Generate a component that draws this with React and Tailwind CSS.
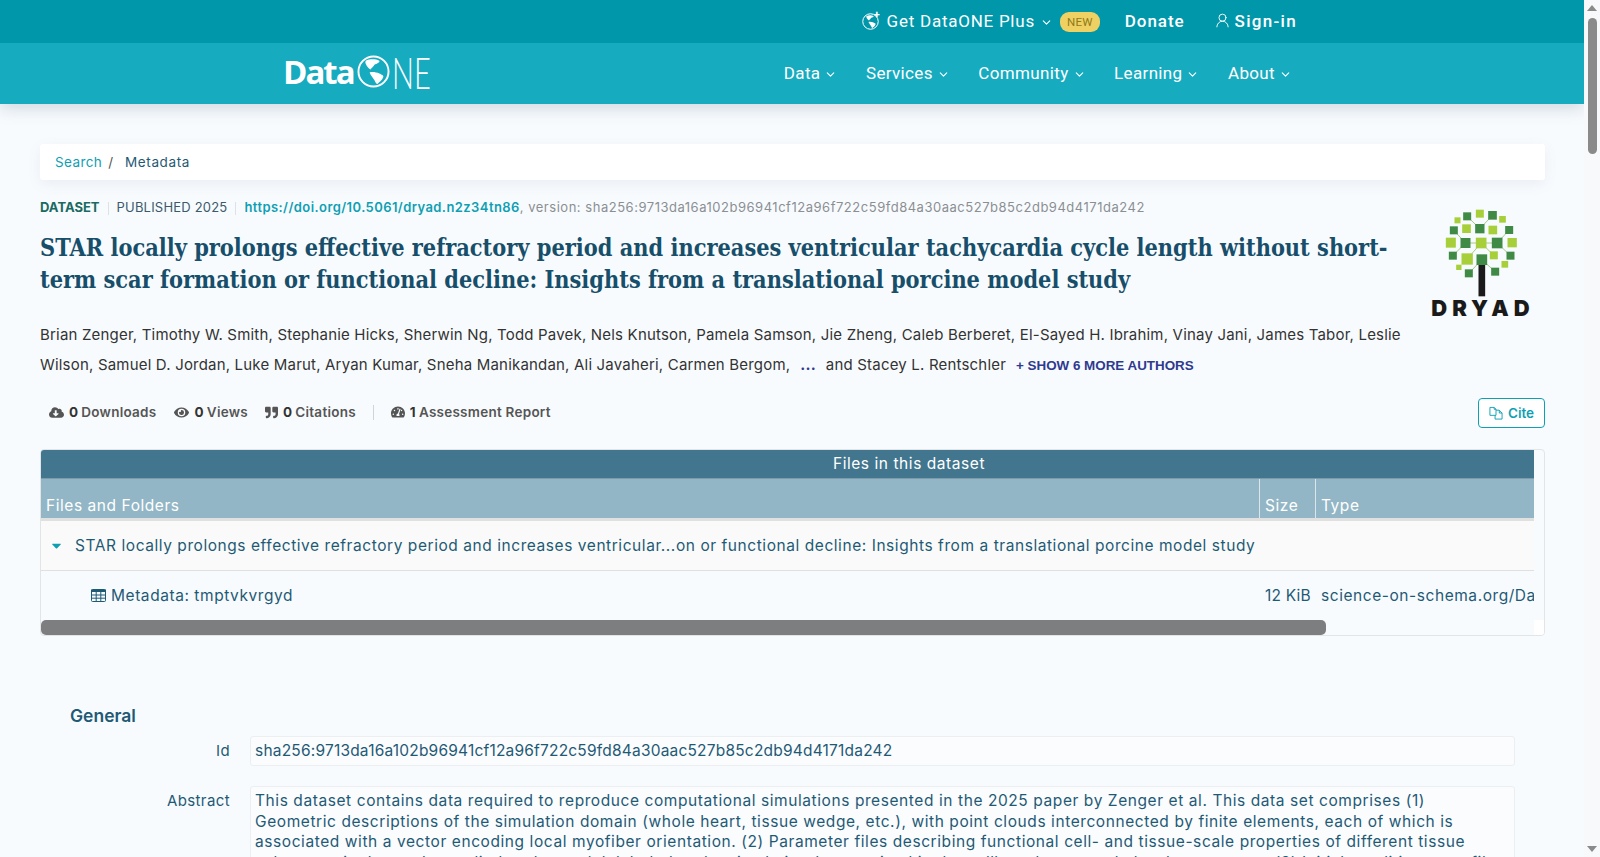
import React from 'react';
import { ChevronDown, UserRound } from 'lucide-react';
import { FaCloudDownloadAlt, FaEye, FaQuoteRight, FaTachometerAlt, FaCaretDown } from 'react-icons/fa';

const TITLE = 'STAR locally prolongs effective refractory period and increases ventricular tachycardia cycle length without short-term scar formation or functional decline: Insights from a translational porcine model study';
const ID = 'sha256:9713da16a102b96941cf12a96f722c59fd84a30aac527b85c2db94d4171da242';

// squares of the Dryad tree: x, y, size (center based)
const DARK = [[262,78,24],[338,75,26],[222,120,24],[300,115,28],[388,119,24],[257,158,30],[352,158,32],[219,196,24],[392,196,24],[306,208,32],[267,249,24],[346,244,24]];
const LIGHT = [[300,70,24],[233,90,18],[368,87,20],[260,115,26],[339,119,26],[213,157,30],[304,158,32],[397,157,28],[262,206,34],[342,195,24],[375,222,20],[237,231,16]];

function DryadLogo() {
  return (
    <div className="w-[102px] flex flex-col items-center">
      <svg viewBox="190 50 230 270" className="w-[77px] h-[90px]">
        <g stroke="#7fb04a" strokeWidth="2" fill="none">
          <path d="M300 115L262 78M300 115L338 75M257 158L222 120M352 158L388 119M257 158L219 196M352 158L392 196M306 208L267 249M306 208L346 244M304 158L257 158M304 158L352 158M304 158L262 206M304 158L342 195" />
        </g>
        {LIGHT.map(([x, y, s], i) => <rect key={i} x={x - s / 2} y={y - s / 2} width={s} height={s} fill="#a6cf3a" />)}
        {DARK.map(([x, y, s], i) => <rect key={i} x={x - s / 2} y={y - s / 2} width={s} height={s} fill="#3f8a45" />)}
        <rect x="296" y="224" width="20" height="94" fill="#1a1a1a" />
      </svg>
      <span className="mt-[2px] ml-[4px] font-['Inter',sans-serif] font-black text-[#1a1a1a] text-[22px] leading-[18px] tracking-[5px] whitespace-nowrap">DRYAD</span>
    </div>
  );
}

function Globe({ className, width = 2 }) {
  return (
    <svg viewBox="0 0 34 34" className={className}>
      <circle cx="17" cy="17" r="15.5" fill="none" stroke="currentColor" strokeWidth={width} />
      <path d="M9 6c4-2 10-2 14 0 1 2-3 3-5 4-1 2-3 3-4 5-2-1-3-3-4-4-1-2-2-3-1-5zM13 18c3-1 7 0 10 1 2 1 5 2 4 4-1 3-4 5-6 7-1 0-2-2-3-4-1-2-4-5-5-8z" fill="currentColor" />
    </svg>
  );
}

function TableIcon() {
  return (
    <svg viewBox="0 0 15 13" className="w-[15px] h-[13px] text-[#1f5a75]" fill="none" stroke="currentColor" strokeWidth="1">
      <rect x="0.5" y="0.5" width="14" height="12" rx="1" />
      <path d="M0 1.8h15" strokeWidth="2.4" />
      <path d="M0 6h15M0 9.2h15M5.2 3v10M9.8 3v10" />
    </svg>
  );
}

function FilesIcon() {
  return (
    <svg viewBox="0 0 15 15" className="w-[14px] h-[14px]" fill="none" stroke="currentColor" strokeWidth="1">
      <path d="M1 1.5h4.5l2 2v6.5H1zM5.5 1.5v2h2" />
      <path d="M7.5 4.5h3.5l3 3v6.5H6.5V10M11 4.5v3h3" />
    </svg>
  );
}

function NavItem({ label }) {
  return (
    <a className="flex items-center gap-[4px] text-white text-[17px] font-['Roboto',sans-serif] tracking-[0.35px]">
      {label}
      <ChevronDown size={13} strokeWidth={2} className="mt-[2px]" />
    </a>
  );
}

function Stat({ icon, num, label }) {
  return (
    <span className="flex items-center text-[#555] text-[13.5px] font-semibold tracking-[0.25px]">
      {icon}
      <b className="ml-[5px] mr-[3px] font-bold text-[#333]">{num}</b>
      {label}
    </span>
  );
}

function Header() {
  return (
    <header className="shrink-0 shadow-[0_4px_16px_rgba(60,90,110,0.22)] relative">
      <div className="h-[43px] bg-[#0097ab] flex items-center justify-end pr-[287px] text-white font-['Roboto',sans-serif]">
        <a className="flex items-center text-[17px] tracking-[0.75px]">
          <span className="relative mr-[8px]">
            <Globe className="w-[17px] h-[17px]" />
            <span className="absolute -top-[4px] -right-[2px] text-[11px] leading-[11px] font-bold">+</span>
          </span>
          Get DataONE Plus
          <ChevronDown size={13} strokeWidth={2} className="ml-[5px] mt-[2px]" />
        </a>
        <span className="ml-[7px] bg-[#eed162] text-[#8f7a1b] text-[11.5px] leading-[20px] h-[20px] px-[7px] rounded-[9px] tracking-[0.3px]">NEW</span>
        <a className="ml-[25px] text-[17px] font-medium tracking-[0.95px]">Donate</a>
        <a className="ml-[29px] flex items-center text-[17px] font-medium tracking-[1.3px]">
          <UserRound size={17} strokeWidth={1.3} className="mr-[4px] -mt-[3px]" />
          Sign-in
        </a>
      </div>
      <div className="h-[61px] bg-[#17abc0] flex items-center pl-[283px] pr-[292px] justify-between">
        <a className="flex items-center text-white -mt-[4px]">
          <span className="font-['Open_Sans',sans-serif] font-bold text-[33px] tracking-[-2px] leading-none">Data</span>
          <Globe className="w-[33px] h-[33px] ml-[3px]" />
          <span className="w-[38px] ml-[2px] inline-block origin-left scale-x-[0.66] font-['Lato',sans-serif] font-light text-[44px] leading-none whitespace-nowrap">NE</span>
        </a>
        <nav className="flex items-center gap-[28.5px]">
          {['Data', 'Services', 'Community', 'Learning', 'About'].map((n) => <NavItem key={n} label={n} />)}
        </nav>
      </div>
    </header>
  );
}

function FilesTable() {
  return (
    <div className="mt-[21px] border border-[#e2e4e6] rounded-[4px] overflow-hidden h-[187px] flex flex-col">
      <div className="flex-1 mr-[10px] overflow-hidden">
        <div className="w-[1736px] text-[15.5px] tracking-[0.56px]">
          <div className="h-[29px] bg-[#41768e] border-b border-[#7d9cab] text-white text-center leading-[28px]">Files in this dataset</div>
          <div className="grid grid-cols-[1219px_56px_1fr] h-[42px] bg-[#92b6c5] border-b-[3px] border-[#e0e0e0] text-white">
            <div className="pl-[5px] pt-[15px] border-r border-[#dbe6eb]">Files and Folders</div>
            <div className="pl-[5px] pt-[15px] border-r border-[#dbe6eb]">Size</div>
            <div className="pl-[5px] pt-[15px]">Type</div>
          </div>
          <div className="h-[50px] bg-[#fafafa] border-b border-[#e0e0e0] flex items-center text-[#1f5a75] whitespace-nowrap">
            <FaCaretDown size={15} className="ml-[8px] mr-[11px] text-[#0f9fb3]" />
            STAR locally prolongs effective refractory period and increases ventricular...on or functional decline: Insights from a translational porcine model study
          </div>
          <div className="grid grid-cols-[1219px_56px_1fr] h-[49px] items-center text-[#1f5a75] whitespace-nowrap">
            <div className="pl-[50px] flex items-center gap-[5px]"><TableIcon />Metadata: tmptvkvrgyd</div>
            <div className="pl-[5px] tracking-[0.2px]">12 KiB</div>
            <div className="pl-[5px]">science-on-schema.org/Dataset</div>
          </div>
        </div>
      </div>
      <div className="h-[15px] flex shrink-0">
        <div className="flex-1"><div className="w-[1285px] h-[15px] bg-[#7d7e80] rounded-[5px]"></div></div>
        <div className="w-[10px] bg-white"></div>
      </div>
    </div>
  );
}

function Field({ label, children, className }) {
  return (
    <div className={`flex ${className}`}>
      <div className="w-[180px] pr-[20px] pt-[4px] text-right text-[15px] tracking-[0.4px] text-[#1f5a75] shrink-0">{label}</div>
      <div className="flex-1 bg-[#fbfcfe] border border-[#eceff1] rounded-[3px] px-[4px] py-[4px] text-[15.5px] leading-[20.4px] text-[#1f5a75]">{children}</div>
    </div>
  );
}

export default function App() {
  return (
    <div className="h-[857px] overflow-hidden flex bg-[#f8fbfe] font-['Inter',sans-serif]">
      <div className="flex-1 min-w-0 flex flex-col overflow-hidden">
        <Header />
        <main className="px-[40px] pr-[39px] pt-[40px]">
          <div className="h-[36px] bg-white rounded-[3px] shadow-[0_4px_14px_rgba(70,90,110,0.08)] flex items-center pl-[15px] text-[13.5px]">
            <a className="text-[#0f9fb3] tracking-[0.4px]">Search</a>
            <span className="text-[#555] ml-[6px]">/</span>
            <span className="text-[#1f5a75] ml-[12px] tracking-[0.6px]">Metadata</span>
          </div>

          <div className="flex mt-[18px]">
            <div className="flex-1 min-w-0">
              <div className="flex items-center h-[20px] text-[13px] whitespace-nowrap">
                <b className="text-[#1a6a63] font-bold">DATASET</b>
                <span className="mx-[8px] h-[13px] border-l border-[#dde2e6]"></span>
                <span className="text-[#3b5a6c] tracking-[0.2px]">PUBLISHED 2025</span>
                <span className="mx-[8px] h-[13px] border-l border-[#dde2e6]"></span>
                <a className="text-[#0f9fb3] font-semibold tracking-[0.42px]">https://doi.org/10.5061/dryad.n2z34tn86</a>
                <span className="text-[#8b8f93] tracking-[0.52px]">, version: {ID}</span>
              </div>
              <h1 className="mt-[14px] w-[1350px] font-['DejaVu_Serif_Condensed','DejaVu_Serif',serif] font-bold text-[23.3px] leading-[32px] text-[#174f6b]">{TITLE}</h1>
              <p className="mt-[24px] w-[1370px] text-[15px] tracking-[0.19px] leading-[30px] text-[#333]">
                Brian Zenger, Timothy W. Smith, Stephanie Hicks, Sherwin Ng, Todd Pavek, Nels Knutson, Pamela Samson, Jie Zheng, Caleb Berberet, El-Sayed H. Ibrahim, Vinay Jani, James Tabor, Leslie Wilson, Samuel D. Jordan, Luke Marut, Aryan Kumar, Sneha Manikandan, Ali Javaheri, Carmen Bergom,
                <b className="mx-[10px] text-[#2f3a8f]">...</b>
                and Stacey L. Rentschler
                <a className="ml-[10px] font-['Liberation_Sans',sans-serif] font-bold text-[13.4px] tracking-normal text-[#2f3a8f]">+ SHOW 6 MORE AUTHORS</a>
              </p>
            </div>
            <div className="shrink-0 pt-[9px] pr-[13px]"><DryadLogo /></div>
          </div>

          <div className="flex items-center justify-between mt-[17px] h-[30px]">
            <div className="flex items-center pl-[9px] -mt-[2px]">
              <Stat icon={<FaCloudDownloadAlt size={15} />} num="0" label="Downloads" />
              <span className="ml-[18px]"><Stat icon={<FaEye size={15} />} num="0" label="Views" /></span>
              <span className="ml-[17px]"><Stat icon={<FaQuoteRight size={13} />} num="0" label="Citations" /></span>
              <span className="ml-[17px] mr-[17px] h-[15px] border-l border-[#cfd4d8]"></span>
              <Stat icon={<FaTachometerAlt size={14} />} num="1" label="Assessment Report" />
            </div>
            <button className="h-[30px] w-[67px] flex items-center justify-center gap-[5px] bg-white border border-[#0f9fb3] rounded-[4px] text-[#0f9fb3] text-[13.5px] font-semibold">
              <FilesIcon />Cite
            </button>
          </div>

          <FilesTable />

          <section className="px-[30px] mt-[68px]">
            <h2 className="text-[#1f5a75] text-[17.5px] font-semibold leading-[24px]">General</h2>
            <Field label="Id" className="mt-[8px]"><span className="tracking-[0.2px]">{ID}</span></Field>
            <Field label="Abstract" className="mt-[20px]">
              <span className="tracking-[0.58px]">This dataset contains data required to reproduce computational simulations presented in the 2025 paper by Zenger et al. This data set comprises (1) Geometric descriptions of the simulation domain (whole heart, tissue wedge, etc.), with point clouds interconnected by finite elements, each of which is associated with a vector encoding local myofiber orientation. (2) Parameter files describing functional cell- and tissue-scale properties of different tissue subgroups in the study, applied to the model, labeled at the simulation (categorized in the cell), and mesoscale level parameters. (3) Initial condition state files</span>
            </Field>
          </section>
        </main>
      </div>

      {/* page scrollbar, headless browser draws none */}
      <div className="w-[16px] shrink-0 bg-[#f8f9fb] flex flex-col items-center pt-[5px] justify-between pb-[5px]">
        <div className="flex flex-col items-center w-full">
          <div className="w-0 h-0 border-x-[5px] border-x-transparent border-b-[6px] border-b-[#8a8a8a]"></div>
          <div className="mt-[7px] w-[9px] h-[136px] bg-[#8a8a8a] rounded-[5px]"></div>
        </div>
        <div className="w-0 h-0 border-x-[5px] border-x-transparent border-t-[6px] border-t-[#8a8a8a]"></div>
      </div>
    </div>
  );
}
